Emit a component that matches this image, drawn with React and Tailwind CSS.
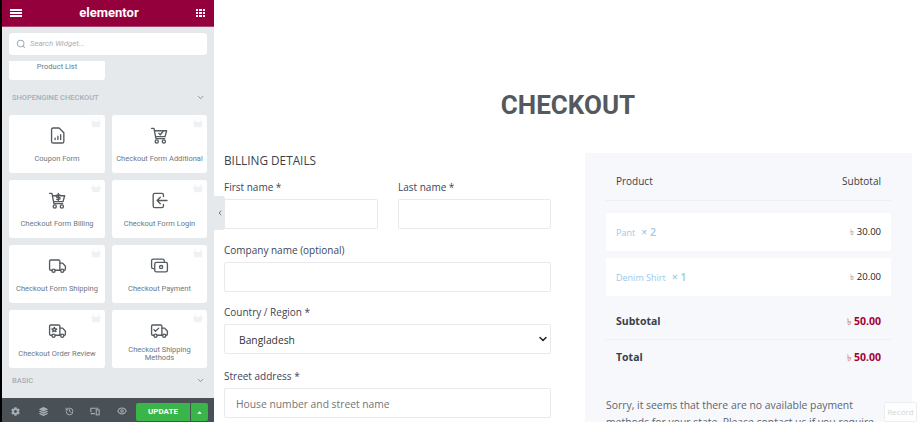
import React from 'react';
import { Search, ChevronDown, ChevronLeft, History, Eye } from 'lucide-react';
import { FaCog, FaLayerGroup, FaCaretUp } from 'react-icons/fa';

const Basket = () => (
  <svg viewBox="0 0 12 12" className="absolute top-[3px] right-[4px] w-[10px] h-[10px] text-[#eff1f3]" fill="currentColor">
    <path d="M4.2 1 2.6 4.4h6.8L7.8 1l.9-.3 1.9 3.7H12v1.4h-.7L10.3 11H1.7L.7 5.8H0V4.4h1.4L3.3.7z" />
  </svg>
);

const svgProps = {
  viewBox: '0 0 24 24',
  fill: 'none',
  stroke: 'currentColor',
  strokeWidth: 1.7,
  strokeLinecap: 'round',
  strokeLinejoin: 'round',
  className: 'w-[19px] h-[19px] text-[#555b61]',
};

const Cart = ({ children }) => (
  <svg {...svgProps}>
    <path d="M2 3h3l2.500 13h11" />
    <path d="M6 6h15l-2 7.500H7.500" />
    <circle cx="8.500" cy="19.500" r="2" />
    <circle cx="17.500" cy="19.500" r="2" />
    {children}
  </svg>
);

const Truck = ({ children }) => (
  <svg {...svgProps}>
    <path d="M5 18H3.500A1.500 1.500 0 0 1 2 16.500v-10A1.500 1.500 0 0 1 3.500 5h10A1.500 1.500 0 0 1 15 6.500V18H9" />
    <path d="M15 9h3.500L22 13v3.500a1.500 1.500 0 0 1-1.500 1.500H20" />
    <path d="M15 18h1" />
    <circle cx="7" cy="18.500" r="2" />
    <circle cx="18" cy="18.500" r="2" />
    {children}
  </svg>
);

const CouponIcon = () => (
  <svg {...svgProps}>
    <path d="M6.500 2.500H14l6 6v11a2 2 0 0 1-2 2H6.500a2 2 0 0 1-2-2v-15a2 2 0 0 1 2-2z" />
    <path d="M9 17v-1.500M12.500 17v-4M16 17v-6" />
  </svg>
);

const LoginIcon = () => (
  <svg {...svgProps}>
    <path d="M17 7V5a2 2 0 0 0-2-2H6a2 2 0 0 0-2 2v14a2 2 0 0 0 2 2h9a2 2 0 0 0 2-2v-2" />
    <path d="M21.500 12H9M13 8l-4 4 4 4" />
  </svg>
);

const PaymentIcon = () => (
  <svg {...svgProps}>
    <path d="M5 16H4a2 2 0 0 1-2-2V6a2 2 0 0 1 2-2h12a2 2 0 0 1 2 2v1" />
    <rect x="6" y="8" width="16" height="12" rx="2" />
    <circle cx="14" cy="14" r="2" />
  </svg>
);

const widgets = [
  { name: 'Coupon Form', icon: <CouponIcon /> },
  { name: 'Checkout Form Additional', icon: <Cart><path d="m11 9 2 2 3.500-4" /></Cart> },
  { name: 'Checkout Form Billing', icon: <Cart><path d="M13 3v9M15 5h-3a1.200 1.200 0 0 0 0 3h2a1.200 1.200 0 0 1 0 2.500h-3" /></Cart> },
  { name: 'Checkout Form Login', icon: <LoginIcon /> },
  { name: 'Checkout Form Shipping', icon: <Truck /> },
  { name: 'Checkout Payment', icon: <PaymentIcon /> },
  { name: 'Checkout Order Review', icon: <Truck><path d="m8 8 1 2h2l-1.500 1.500.5 2-2-1-2 1 .5-2L5 10h2z" /></Truck> },
  { name: 'Checkout Shipping\nMethods', icon: <Truck><path d="m5 11 2 2 4-4" /></Truck> },
];

const WidgetCard = ({ name, icon }) => (
  <div className="relative h-[58px] bg-white rounded-[3px] flex flex-col items-center pt-[11px]">
    <Basket />
    <div className="h-[19px]">{icon}</div>
    <div className="h-[23px] mt-[2px] flex items-center">
      <p className="text-[7.500px] leading-[8px] text-center text-[#6d7882] whitespace-pre-line">{name}</p>
    </div>
  </div>
);

const Sidebar = () => (
  <aside className="w-[212px] h-full ml-[2px] shrink-0 bg-[#e6e9ec] flex flex-col font-['Roboto',sans-serif]">
    <header className="h-[27px] shrink-0 bg-[#93003c] border-b border-[#a8466e] flex items-center justify-between pl-[8px] pr-[9px] text-white">
      <svg viewBox="0 0 12 8" className="w-3 h-2" fill="currentColor">
        <path d="M0 0h12v2H0zM0 3h12v2H0zM0 6h12v2H0z" />
      </svg>
      <span className="text-[13px] font-bold">elementor</span>
      <div className="grid grid-cols-3 gap-[1px] w-[9px]">
        {[...Array(9)].map((_, i) => <span key={i} className="h-[2px] bg-white" />)}
      </div>
    </header>
    <div className="px-[7px] pt-[6px]">
      <div className="h-[22px] bg-white rounded-[3px] flex items-center pl-[7px] gap-[4px]">
        <Search className="w-[10px] h-[10px] text-[#a4afb7]" strokeWidth={2.500} />
        <span className="text-[7.800px] italic text-[#a4afb7]">Search Widget...</span>
      </div>
    </div>
    <div className="px-[7px] mt-[6px]">
      <div className="w-[96px] h-[19px] pt-[1px] bg-white rounded-b-[3px] text-center text-[7.500px] leading-[10px] text-[#6d7882]">Product List</div>
    </div>
    <div className="h-[35px] flex items-center justify-between pl-[10px] pr-[9px] text-[7.500px] text-[#a4afb7]">
      <span className="font-medium">SHOPENGINE CHECKOUT</span>
      <ChevronDown className="w-[9px] h-[9px] text-[#6d7882]" />
    </div>
    <div className="grid grid-cols-[96px_95px] gap-[7px] px-[7px]">
      {widgets.map((w) => <WidgetCard key={w.name} {...w} />)}
    </div>
    <div className="flex-1 flex items-center justify-between pl-[10px] pr-[9px] pb-[5px] text-[7.500px] text-[#a4afb7]">
      <span className="font-medium">BASIC</span>
      <ChevronDown className="w-[9px] h-[9px] text-[#6d7882]" />
    </div>
    <footer className="h-6 shrink-0 bg-[#495157] flex items-center pt-[2px] pl-[9px] pr-[6px] text-[#a4afb7]">
      <FaCog className="w-[9px] h-[9px]" />
      <FaLayerGroup className="w-[9px] h-[9px] ml-[19px]" />
      <History className="w-[9px] h-[9px] ml-[17px]" strokeWidth={2.500} />
      <svg viewBox="0 0 12 10" className="w-[10px] h-[9px] ml-[16px]" fill="none" stroke="currentColor" strokeWidth="1.300">
        <path d="M1 6V1h9M1 7.500h5" />
        <rect x="7.500" y="3" width="3.500" height="6" />
      </svg>
      <Eye className="w-[10px] h-[10px] ml-[17px]" strokeWidth={2.500} />
      <div className="ml-auto flex gap-px h-[18px] self-end mb-[1px]">
        <div className="w-[54px] bg-[#39b54a] rounded-l-[2px] text-white text-[8px] font-bold flex items-center justify-center">UPDATE</div>
        <div className="w-[17px] bg-[#39b54a] rounded-r-[2px] text-white flex items-center justify-center">
          <FaCaretUp className="w-[7px] h-[7px]" />
        </div>
      </div>
    </footer>
  </aside>
);

const Field = ({ label, className = '', children }) => (
  <div className={className}>
    <label className="block text-[10px] leading-4 text-[#3d4459] mb-[4px]">{label}</label>
    {children || <div className="h-[30px] bg-white border border-[#e8eaee] rounded-[2px]" />}
  </div>
);

const Billing = () => (
  <section className="w-[327px] shrink-0">
    <h3 className="text-[11.800px] leading-4 font-medium text-[#3a3f4b]">BILLING DETAILS</h3>
    <div className="grid grid-cols-[154px_153px] gap-x-5 mt-[11px]">
      <Field label="First name *" />
      <Field label="Last name *" />
    </div>
    <Field label="Company name (optional)" className="mt-[13px]" />
    <Field label="Country / Region *" className="mt-[12px]">
      <div className="h-[30px] bg-white border border-[#e8eaee] rounded-[2px] flex items-center justify-between pl-[14px] pr-[1px] text-[10.300px] text-[#333]">
        <span className="pt-[3px]">Bangladesh</span>
        <ChevronDown className="w-3 h-3 text-[#222]" strokeWidth={3} />
      </div>
    </Field>
    <Field label="Street address *" className="mt-[14px]">
      <div className="h-[30px] bg-white border border-[#e8eaee] rounded-[2px] flex items-center pl-[11px] pt-[3px] text-[10.300px] text-[#757575]">
        House number and street name
      </div>
    </Field>
  </section>
);

const items = [
  { name: 'Pant', qty: '× 2', price: '30.00' },
  { name: 'Denim Shirt', qty: '× 1', price: '20.00' },
];

const OrderReview = () => (
  <section className="w-[327px] shrink-0 mt-[1px] bg-[#f6f8fc] px-[21px] h-[300px] text-[10px]">
    <div className="h-[48px] border-b border-[#eceef3] flex items-center justify-between px-[10px] text-[#3a3f4b] pt-[10px]">
      <span>Product</span>
      <span>Subtotal</span>
    </div>
    <div className="mt-[12px] flex flex-col gap-[7px]">
      {items.map((item) => (
        <div key={item.name} className="h-[38px] bg-white flex items-center justify-between px-[10px] pt-[1px] text-[9.500px]">
          <span className="text-[#9dc8e8] text-[9px]">
            {item.name}
            <span className="font-semibold text-[10.500px] ml-[6px]">{item.qty}</span>
          </span>
          <span className="text-[#222]"><span className="text-[#999] text-[8px]">৳</span> {item.price}</span>
        </div>
      ))}
    </div>
    <div className="h-[44px] border-b border-[#eceef3] flex items-center justify-between px-[10px] pt-[9px] font-bold text-[#3a3f4b] text-[10.500px]">
      <span>Subtotal</span>
      <span className="text-[#a50035]"><span className="text-[#d9a68e] text-[9px]">৳</span> 50.00</span>
    </div>
    <div className="h-[34px] flex items-center justify-between px-[10px] pt-[2px] font-bold text-[#3a3f4b] text-[10.500px]">
      <span>Total</span>
      <span className="text-[#a50035]"><span className="text-[#d9a68e] text-[9px]">৳</span> 50.00</span>
    </div>
    <p className="mt-[23px] text-[10.400px] leading-[17px] text-[#5f6470] w-[270px]">
      Sorry, it seems that there are no available payment methods for your state. Please contact us if you require assistance.
    </p>
  </section>
);

export default function App() {
  return (
    <div className="relative w-[920px] h-[422px] overflow-hidden flex bg-white font-['Open_Sans',sans-serif]">
      <div className="absolute left-0 top-0 bottom-0 w-[2px] bg-black" />
      <Sidebar />
      <main className="flex-1 pl-[10px]">
        <h1 className="w-[688px] text-center font-['Roboto',sans-serif] font-bold text-[26px] leading-[30px] text-[#54595f] mt-[90px] mb-[32px]">CHECKOUT</h1>
        <div className="flex gap-[34px]">
          <Billing />
          <OrderReview />
        </div>
      </main>
      <div className="absolute left-[214px] top-[196px] w-[11px] h-[34px] bg-[#e6e9ec] rounded-r-[3px] flex items-center justify-center">
        <ChevronLeft className="w-2 h-2 text-[#6d7882]" strokeWidth={3} />
      </div>
      <div className="absolute right-[3px] bottom-0 w-[33px] h-[20px] bg-white/80 border border-[#eeeeee] rounded-[2px] text-[8px] text-[#d6d6d6] flex items-center justify-center">Record</div>
    </div>
  );
}
